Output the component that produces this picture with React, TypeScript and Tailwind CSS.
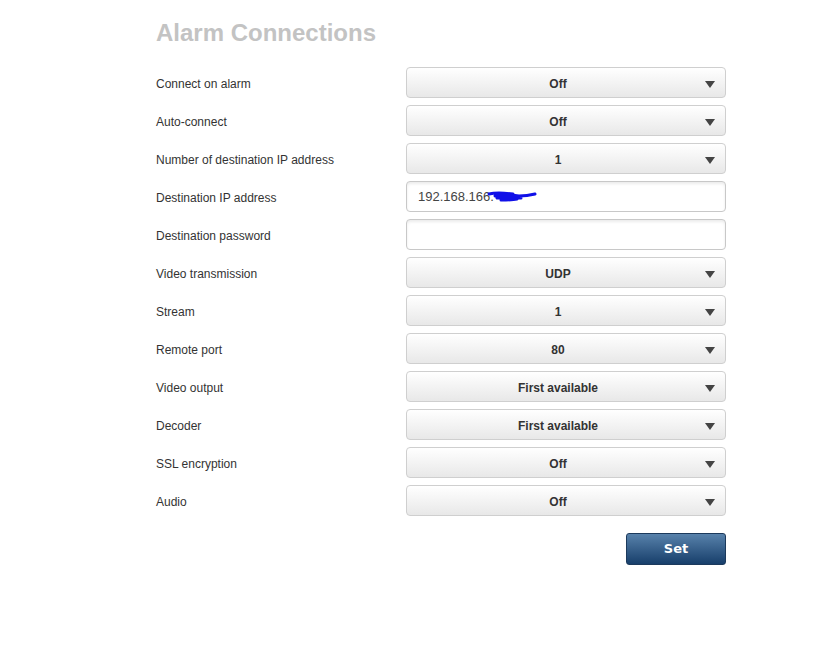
const rows: { label: string; value?: string; input?: string }[] = [
  { label: "Connect on alarm", value: "Off" },
  { label: "Auto-connect", value: "Off" },
  { label: "Number of destination IP address", value: "1" },
  { label: "Destination IP address", input: "192.168.166." },
  { label: "Destination password", input: "" },
  { label: "Video transmission", value: "UDP" },
  { label: "Stream", value: "1" },
  { label: "Remote port", value: "80" },
  { label: "Video output", value: "First available" },
  { label: "Decoder", value: "First available" },
  { label: "SSL encryption", value: "Off" },
  { label: "Audio", value: "Off" },
];

const Scribble = () => (
  <svg width="50" height="16" viewBox="0 0 50 16" className="absolute left-[80px] top-[6px]">
    <path
      d="M2 6 C10 4 18 5 26 6 M8 8 C16 6 24 7 32 8 C38 8 44 7 48 6 M10 10 C18 9 26 10 34 10 M14 12 C20 12 26 12 30 11"
      stroke="#1010e8"
      strokeWidth="3"
      fill="none"
      strokeLinecap="round"
    />
  </svg>
);

const App = () => {
  return (
    <div className="min-h-[667px] w-[826px] bg-white pl-[156px] pt-[19px] font-['Liberation_Sans',Arial,sans-serif] text-[#333]">
      <h1 className="text-[24px] font-bold leading-[28px] text-[#c3c3c3]">Alarm Connections</h1>

      <div className="mt-[20px] flex w-[570px] flex-col gap-[7px]">
        {rows.map((r) => (
          <div key={r.label} className="flex items-center">
            <div className="w-[250px] pt-[2px] text-[12px]">{r.label}</div>
            {r.value !== undefined ? (
              <div className="relative flex h-[31px] w-[320px] items-center justify-center rounded-[4px] border border-[#cfcfcf] bg-gradient-to-b from-[#ffffff] to-[#e8e8e8] pr-[16px] pt-[2px] text-[12px] font-bold text-[#333]">
                {r.value}
                <span className="absolute right-[10px] top-[13px] h-0 w-0 border-x-[5px] border-t-[7px] border-x-transparent border-t-[#444]" />
              </div>
            ) : (
              <div className="relative flex h-[31px] w-[320px] items-center rounded-[4px] border border-[#c8c8c8] bg-white px-[11px] text-[13px] text-[#444] shadow-[inset_0_2px_3px_rgba(0,0,0,0.08)]">
                {r.input}
                {r.input ? <Scribble /> : null}
              </div>
            )}
          </div>
        ))}
      </div>

      <div className="mt-[17px] flex w-[570px] justify-end">
        <button className="h-[32px] w-[100px] rounded-[3px] border border-[#1c3a5c] bg-gradient-to-b from-[#5882ab] to-[#173f6b] font-['DejaVu_Sans',Verdana,sans-serif] text-[13px] font-bold text-white">
          Set
        </button>
      </div>
    </div>
  );
};

export default App;
